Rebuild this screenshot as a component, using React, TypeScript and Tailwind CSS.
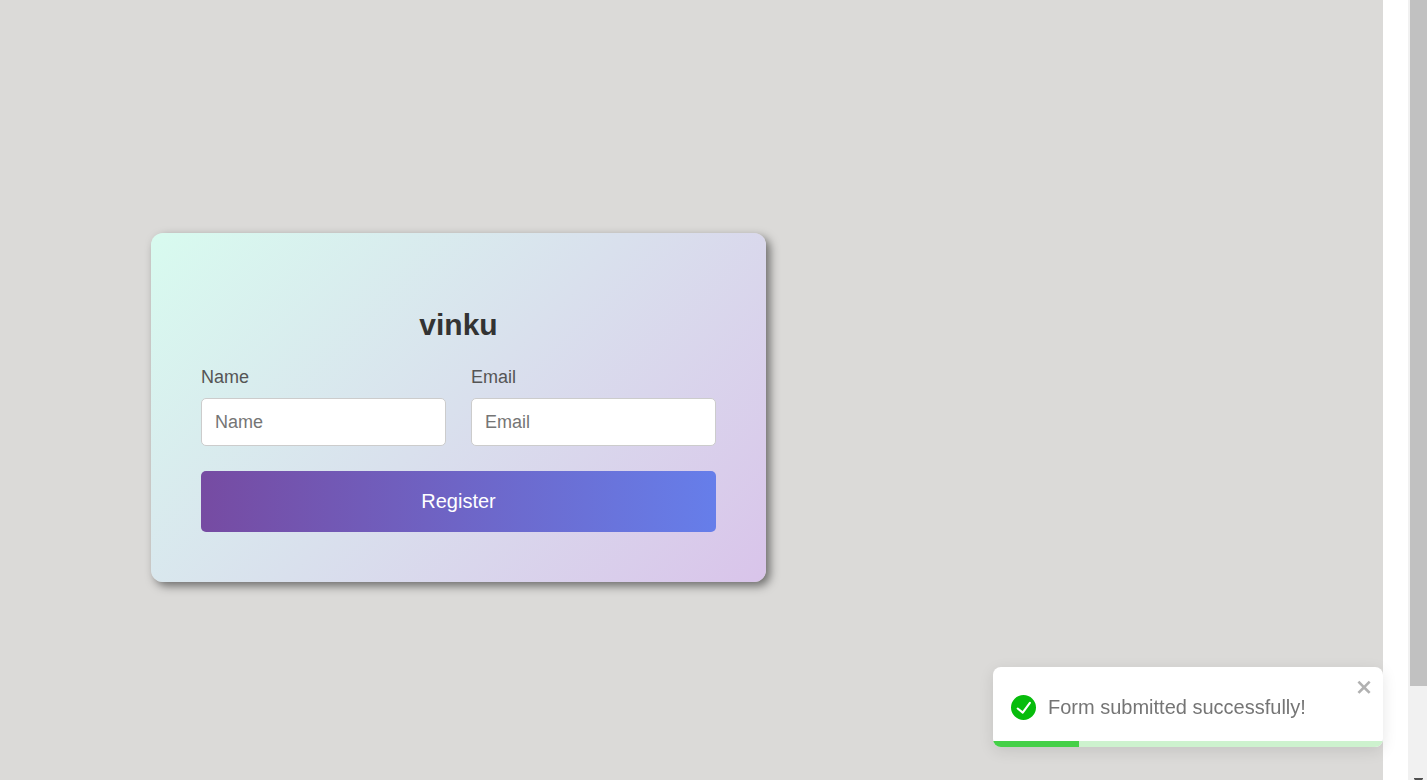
import React from "react";

type FieldProps = { id: string; label: string; type: string };

function Field({ id, label, type }: FieldProps) {
  return (
    <div className="flex min-w-0 flex-1 flex-col gap-[11px]">
      <label htmlFor={id} className="text-[18px] leading-5 text-[#555]">
        {label}
      </label>
      <input
        id={id}
        type={type}
        placeholder={label}
        className="h-12 w-full rounded-[5px] border border-[#ccc] bg-white px-[13px] text-[18px] text-[#333] placeholder:text-[#757575]"
      />
    </div>
  );
}

function RegisterCard() {
  return (
    <form
      onSubmit={(e) => e.preventDefault()}
      className="w-full max-w-[615px] rounded-xl bg-linear-135 from-[#d8fbef] via-[#d9e0ed] to-[#d9c4ea] px-[50px] pt-[74px] pb-[50px] shadow-[4px_4px_10px_rgba(0,0,0,0.5)]"
    >
      <h1 className="text-center text-[30px] leading-9 font-bold text-[#333]">vinku</h1>
      <div className="mt-6 flex gap-[25px]">
        <Field id="name" label="Name" type="text" />
        <Field id="email" label="Email" type="email" />
      </div>
      <button
        type="submit"
        className="mt-[25px] h-[61px] w-full rounded-[5px] bg-linear-[to_right,#764ba2,#667eea] pb-[2px] text-[20px] text-white"
      >
        Register
      </button>
    </form>
  );
}

function Toast() {
  return (
    <div
      role="status"
      className="fixed right-[44px] bottom-[33px] flex h-20 w-[390px] flex-col overflow-hidden rounded-lg bg-white shadow-[0_4px_15px_rgba(0,0,0,0.1)]"
    >
      <div className="flex flex-1 items-center gap-3 pt-[6px] pl-[18px]">
        <svg viewBox="0 0 24 24" className="size-[25px] shrink-0" fill="#07bc0c" aria-hidden="true">
          <path d="M12 0a12 12 0 1012 12A12.014 12.014 0 0012 0zm6.927 8.2l-6.845 9.289a1.011 1.011 0 01-1.43.188l-4.888-3.908a1 1 0 111.25-1.562l4.076 3.261 6.227-8.451a1 1 0 111.61 1.183z" />
        </svg>
        <p className="flex-1 text-[20px] leading-7 whitespace-nowrap text-[#757575]">
          Form submitted successfully!
        </p>
        <button type="button" aria-label="close" className="mr-[9px] self-start pt-1 opacity-30">
          <svg viewBox="0 0 14 16" className="h-5 w-[18px]" fill="#000" aria-hidden="true">
            <path
              fillRule="evenodd"
              d="M7.71 8.23l3.75 3.75-1.48 1.48-3.75-3.75-3.75 3.75L1 11.98l3.75-3.75L1 4.48 2.48 3l3.75 3.75L9.98 3l1.48 1.48-3.75 3.75z"
            />
          </svg>
        </button>
      </div>
      <div className="h-[6px] bg-[#cdf2ce]">
        <div className="h-full w-[22%] bg-[#45d048]" />
      </div>
    </div>
  );
}

function Scrollbar() {
  return (
    <div className="flex w-[19px] flex-col justify-between overflow-hidden bg-[#f1f1f1] pl-[2px]" aria-hidden="true">
      <div className="h-[88%] bg-[#c1c1c1]" />
      <svg viewBox="0 0 17 2" className="h-[2px] w-[17px]" fill="#505050">
        <path d="M4 0h9v1l-1 1H5L4 1z" />
      </svg>
    </div>
  );
}

export default function App() {
  return (
    <div className="flex h-screen overflow-hidden bg-white font-['Liberation_Sans',Arial,sans-serif]">
      <main className="mr-[25px] flex-1 bg-[#dbdad8] pt-[233px] pl-[151px]">
        <RegisterCard />
      </main>
      <Scrollbar />
      <Toast />
    </div>
  );
}
